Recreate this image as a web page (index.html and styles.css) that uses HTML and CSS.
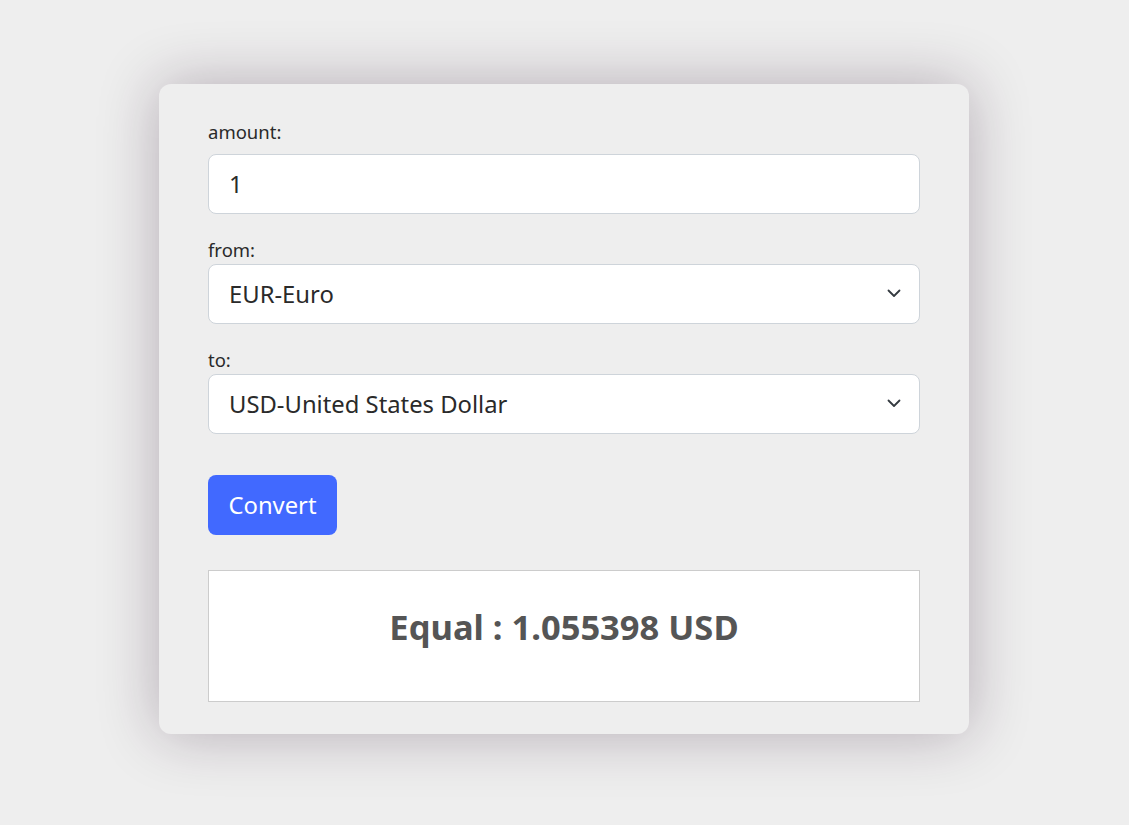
FILE: index.html
```html
<!DOCTYPE html>
<html lang="en">
<head>
<meta charset="utf-8">
<title>Currency Converter</title>
<link rel="stylesheet" href="styles.css">
</head>
<body>
<main class="page">
  <form class="card">
    <div class="field field-first">
      <label class="label" for="amount">amount:</label>
      <input class="control" id="amount" type="text" value="1">
    </div>
    <div class="field">
      <label class="label" for="from">from:</label>
      <div class="select-wrap">
        <select class="control select" id="from">
          <option>EUR-Euro</option>
        </select>
        <svg class="chev" width="16" height="16" viewBox="0 0 16 16"><path d="M2.5 5.5l5.5 5.5 5.5-5.5" fill="none" stroke="#343a40" stroke-width="1.8" stroke-linecap="round" stroke-linejoin="round"/></svg>
      </div>
    </div>
    <div class="field">
      <label class="label" for="to">to:</label>
      <div class="select-wrap">
        <select class="control select" id="to">
          <option>USD-United States Dollar</option>
        </select>
        <svg class="chev" width="16" height="16" viewBox="0 0 16 16"><path d="M2.5 5.5l5.5 5.5 5.5-5.5" fill="none" stroke="#343a40" stroke-width="1.8" stroke-linecap="round" stroke-linejoin="round"/></svg>
      </div>
    </div>
    <button class="btn" type="button">Convert</button>
    <div class="result">Equal : 1.055398 USD</div>
  </form>
</main>
</body>
</html>
```

FILE: styles.css
```css
* { box-sizing: border-box; }
html, body { margin: 0; padding: 0; }
body {
  background: #eeeeee;
  font-family: "Segoe UI", "Noto Sans", "Open Sans", sans-serif;
  color: #2a2a2a;
}
.page {
  display: flex;
  justify-content: center;
  padding: 84px 1px 91px 0;
}
.card {
  width: 810px;
  background: #eeeeee;
  border-radius: 12px;
  box-shadow: 0 0 60px rgba(45, 20, 45, 0.3);
  padding: 32px 49px 32px;
  display: flex;
  flex-direction: column;
}
.field { display: flex; flex-direction: column; margin-bottom: 24px; }
.label {
  font-size: 18.5px;
  line-height: 24px;
  color: #2a2a2a;
  margin-bottom: 2px;
}
.field-first .label { margin-top: 4px; margin-bottom: 10px; }
.control {
  width: 100%;
  height: 60px;
  border: 1px solid #ced4da;
  border-radius: 8px;
  background: #fff;
  padding: 0 20px;
  font-family: inherit;
  font-size: 23.8px;
  color: #2a2a2a;
  outline: none;
}
.select-wrap { position: relative; }
.select { appearance: none; -webkit-appearance: none; }
.chev { position: absolute; right: 18px; top: 21px; pointer-events: none; }
.btn {
  align-self: flex-start;
  margin-top: 17px;
  height: 60px;
  width: 129px;
  padding: 0;
  border: none;
  border-radius: 8px;
  background: #4169ff;
  color: #fff;
  font-family: inherit;
  font-size: 23.8px;
}
.result {
  margin-top: 35px;
  height: 132px;
  padding-bottom: 20px;
  background: #fff;
  border: 1px solid #cccccc;
  display: flex;
  align-items: center;
  justify-content: center;
  font-size: 34.5px;
  font-weight: 700;
  color: #555555;
}
```
